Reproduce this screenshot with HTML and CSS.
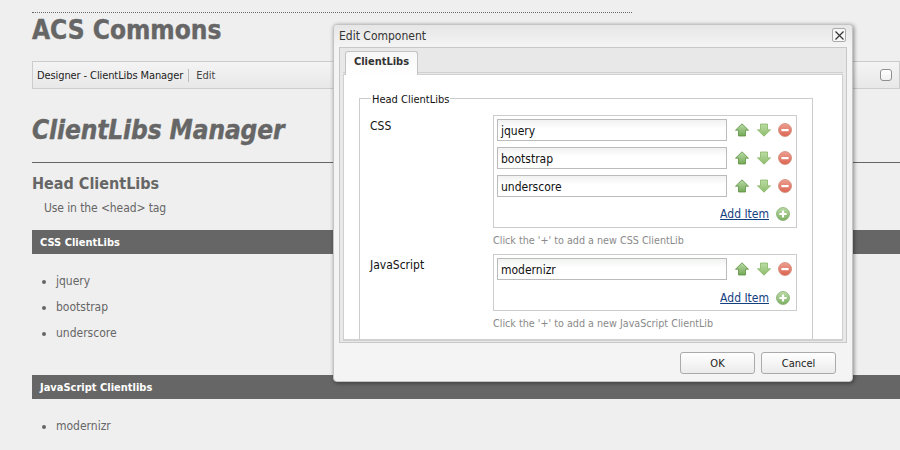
FILE: index.html
```html
<!DOCTYPE html>
<html lang="en">
<head>
  <meta charset="UTF-8" />
  <title>ClientLibs Manager</title>
  <link rel="stylesheet" href="styles.css">
</head>

<body>
  <svg class="defs" width="0" height="0">
    <defs>
      <linearGradient id="gradUp" x1="0" y1="0" x2="0" y2="1">
        <stop offset="0" stop-color="#b9dba6" />
        <stop offset="1" stop-color="#74a957" />
      </linearGradient>
      <linearGradient id="gradDown" x1="0" y1="0" x2="0" y2="1">
        <stop offset="0" stop-color="#bcdca4" />
        <stop offset="1" stop-color="#8dbd6c" />
      </linearGradient>
      <linearGradient id="gradRed" x1="0" y1="0" x2="0" y2="1">
        <stop offset="0" stop-color="#ec9f91" />
        <stop offset="1" stop-color="#dc6450" />
      </linearGradient>
      <linearGradient id="gradPlus" x1="0" y1="0" x2="0" y2="1">
        <stop offset="0" stop-color="#bcdba8" />
        <stop offset="1" stop-color="#7bb061" />
      </linearGradient>
      <symbol id="iconUp" viewBox="0 0 14 14">
        <path d="M7 .8 L13.5 7.2 H10.5 V13 H3.5 V7.2 H.5 Z" fill="url(#gradUp)" stroke="#5c9140" stroke-width=".8" stroke-linejoin="round" />
      </symbol>
      <symbol id="iconDown" viewBox="0 0 14 14">
        <path d="M7 13.2 L.5 6.8 H3.5 V1 H10.5 V6.8 H13.5 Z" fill="url(#gradDown)" stroke="#86b565" stroke-width=".8" stroke-linejoin="round" />
      </symbol>
      <symbol id="iconRemove" viewBox="0 0 14 14">
        <circle cx="7" cy="7" r="6.5" fill="url(#gradRed)" stroke="#cf8a7a" stroke-width=".8" />
        <rect x="3.4" y="6" width="7.2" height="2.2" fill="#fff" />
      </symbol>
      <symbol id="iconAdd" viewBox="0 0 14 14">
        <circle cx="7" cy="7" r="6.5" fill="url(#gradPlus)" stroke="#86ad72" stroke-width=".8" />
        <path d="M5.9 3.4 H8.1 V5.9 H10.6 V8.1 H8.1 V10.6 H5.9 V8.1 H3.4 V5.9 H5.9 Z" fill="#fff" />
      </symbol>
    </defs>
  </svg>

  <div class="page">
    <h1 class="site-title">ACS Commons</h1>

    <div class="toolbar">
      <span class="toolbar-name">Designer - ClientLibs Manager</span>
      <span class="toolbar-edit">Edit</span>
      <input class="toolbar-check" type="checkbox" />
    </div>

    <h2 class="page-title">ClientLibs Manager</h2>

    <h3 class="section-title">Head ClientLibs</h3>
    <p class="section-note">Use in the &lt;head&gt; tag</p>

    <div class="bar">CSS ClientLibs</div>
    <ul class="lib-list">
      <li>jquery</li>
      <li>bootstrap</li>
      <li>underscore</li>
    </ul>

    <div class="bar bar-js">JavaScript Clientlibs</div>
    <ul class="lib-list">
      <li>modernizr</li>
    </ul>
  </div>

  <div class="dialog">
    <div class="dialog-head">
      <span class="dialog-title">Edit Component</span>
      <span class="dialog-close">
        <svg width="9" height="9" viewBox="0 0 9 9"><path d="M.5 .5 L8.5 8.5 M8.5 .5 L.5 8.5" stroke="#333" stroke-width="1.2" /></svg>
      </span>
    </div>

    <div class="dialog-panel">
      <div class="tab-strip">
        <div class="tab">ClientLibs</div>
      </div>

      <div class="tab-body">
        <div class="fieldset">
          <div class="legend">Head ClientLibs</div>

          <div class="field">
            <div class="field-label">CSS</div>
            <div class="field-main">
              <div class="multi multi-css">
                <div class="multi-row">
                  <div class="text-input">jquery</div>
                  <svg class="icon icon-up"><use href="#iconUp" /></svg>
                  <svg class="icon"><use href="#iconDown" /></svg>
                  <svg class="icon"><use href="#iconRemove" /></svg>
                </div>
                <div class="multi-row">
                  <div class="text-input">bootstrap</div>
                  <svg class="icon icon-up"><use href="#iconUp" /></svg>
                  <svg class="icon"><use href="#iconDown" /></svg>
                  <svg class="icon"><use href="#iconRemove" /></svg>
                </div>
                <div class="multi-row">
                  <div class="text-input">underscore</div>
                  <svg class="icon icon-up"><use href="#iconUp" /></svg>
                  <svg class="icon"><use href="#iconDown" /></svg>
                  <svg class="icon"><use href="#iconRemove" /></svg>
                </div>
                <div class="add-row">
                  <a class="add-link" href="#">Add Item</a>
                  <svg class="icon"><use href="#iconAdd" /></svg>
                </div>
              </div>
              <div class="hint">Click the '+' to add a new CSS ClientLib</div>
            </div>
          </div>

          <div class="field">
            <div class="field-label">JavaScript</div>
            <div class="field-main">
              <div class="multi multi-js">
                <div class="multi-row">
                  <div class="text-input">modernizr</div>
                  <svg class="icon icon-up"><use href="#iconUp" /></svg>
                  <svg class="icon"><use href="#iconDown" /></svg>
                  <svg class="icon"><use href="#iconRemove" /></svg>
                </div>
                <div class="add-row">
                  <a class="add-link" href="#">Add Item</a>
                  <svg class="icon"><use href="#iconAdd" /></svg>
                </div>
              </div>
              <div class="hint">Click the '+' to add a new JavaScript ClientLib</div>
            </div>
          </div>
        </div>
      </div>
    </div>

    <div class="dialog-foot">
      <button class="btn">OK</button>
      <button class="btn">Cancel</button>
    </div>
  </div>
</body>
</html>
```

FILE: styles.css
```css
html, body {
  margin: 0;
  padding: 0;
  height: 450px;
  overflow: hidden;
}

body {
  position: relative;
  background: #efefef;
  color: #666;
  font-family: "DejaVu Sans Condensed", "DejaVu Sans", sans-serif;
  font-stretch: condensed;
  font-size: 11px;
}

.defs {
  position: absolute;
}

.page {
  margin-left: 32px;
  padding-top: 12px;
}

.site-title {
  width: 600px;
  height: 36px;
  margin: 0;
  border-top: 1px dotted #666;
  font-size: 26px;
  line-height: 35px;
  font-weight: 700;
  -webkit-text-stroke: 0.4px #666;
}

.toolbar {
  display: flex;
  align-items: center;
  box-sizing: border-box;
  height: 28px;
  margin: 12px 0 0;
  padding: 0 7px 0 4px;
  width: 868px;
  border: 1px solid #ccc;
  background: linear-gradient(#f4f4f4, #e8e8e8);
  color: #222;
}

.toolbar-name {
  padding-right: 5px;
  border-right: 1px solid #bbb;
  line-height: 13px;
  letter-spacing: -0.1px;
  white-space: nowrap;
}

.toolbar-edit {
  margin-left: 7px;
  color: #444;
}

.toolbar-check {
  appearance: none;
  box-sizing: border-box;
  width: 12px;
  height: 12px;
  margin: 0 0 0 auto;
  border: 1px solid #8f8f8f;
  border-radius: 3px;
  background: linear-gradient(#fff, #f0f0f0);
}

.page-title {
  margin: 23px 0 0;
  height: 50px;
  border-bottom: 1px solid #666;
  font-size: 26px;
  line-height: 36px;
  font-style: italic;
  font-weight: 700;
  letter-spacing: -0.1px;
  -webkit-text-stroke: 0.4px #666;
}

.section-title {
  margin: 12px 0 0;
  font-size: 16px;
  line-height: 18px;
  font-weight: 700;
}

.section-note {
  margin: 7px 0 0 12px;
  font-size: 12px;
  line-height: 16px;
  letter-spacing: -0.1px;
}

.bar {
  box-sizing: border-box;
  height: 24px;
  margin-top: 14px;
  padding: 1px 0 0 8px;
  background: #666;
  color: #fff;
  font-size: 11px;
  font-weight: 700;
  line-height: 23px;
}

.bar-js {
  margin-top: 29px;
}

.lib-list {
  margin: 14px 0 0;
  padding: 0 0 0 24px;
  font-size: 12px;
  line-height: 26px;
}

.dialog {
  position: absolute;
  left: 333px;
  top: 24px;
  box-sizing: border-box;
  width: 520px;
  height: 358px;
  padding: 0 5px;
  border: 1px solid #c4c4c4;
  border-radius: 4px;
  background: #f4f4f4;
  box-shadow: 1px 1px 4px rgba(0, 0, 0, 0.45);
  color: #111;
  font-size: 11px;
}

.dialog-head {
  display: flex;
  justify-content: space-between;
  align-items: center;
  height: 20px;
  margin: 0 -5px;
  padding: 0 6px 2px 5px;
  border-radius: 4px 4px 0 0;
  background: linear-gradient(#e6e6e6, #f4f4f4);
  color: #333;
  font-size: 12px;
}

.dialog-title {
  padding-top: 2px;
}

.dialog-close {
  display: flex;
  align-items: center;
  justify-content: center;
  box-sizing: border-box;
  width: 14px;
  height: 14px;
  border: 1px solid #aaa;
  border-radius: 2px;
  background: #f7f7f7;
}

.dialog-panel {
  box-sizing: border-box;
  height: 296px;
  border: 1px solid #c8c8c8;
  background: #e8e8e8;
}

.tab-strip {
  display: flex;
  height: 24px;
  margin: 0 3px;
  padding-left: 2px;
  border-bottom: 1px solid #d0d0d0;
}

.tab {
  box-sizing: border-box;
  position: relative;
  width: 73px;
  height: 24px;
  margin-top: 3px;
  border: 1px solid #c4c4c4;
  border-bottom: none;
  border-radius: 3px 3px 0 0;
  background: linear-gradient(#f7f7f7, #fff);
  color: #333;
  font-weight: 700;
  text-align: center;
  line-height: 19px;
}

.tab-body {
  box-sizing: border-box;
  height: 267px;
  margin: 1px 3px 0;
  overflow: hidden;
  border: 1px solid #d0d0d0;
  border-bottom-width: 2px;
  background: #fff;
}

.fieldset {
  box-sizing: border-box;
  position: relative;
  width: 454px;
  height: 280px;
  margin: 23px 0 0 15px;
  padding: 16px 0 0 10px;
  border: 1px solid #ccc;
}

.legend {
  position: absolute;
  top: -6px;
  left: 11px;
  padding: 0 1px;
  background: #fff;
  font-size: 11px;
  line-height: 13px;
  white-space: nowrap;
}

.field {
  display: flex;
}

.field-label {
  width: 123px;
  padding-top: 4px;
  font-size: 12px;
  line-height: 14px;
}

.field-main {
  width: 304px;
  padding-bottom: 7px;
}

.multi {
  box-sizing: border-box;
  width: 304px;
  padding: 3px 2px 0 3px;
  border: 1px solid #ccc;
}

.multi-css {
  height: 113px;
}

.multi-js {
  height: 57px;
}

.multi-js .add-row {
  margin-top: 10px;
}

.multi-row {
  display: flex;
  align-items: center;
  gap: 7px;
  height: 22px;
  margin-bottom: 6px;
}

.text-input {
  box-sizing: border-box;
  width: 230px;
  height: 22px;
  margin-right: 1px;
  padding: 1px 0 0 3px;
  border: 1px solid #bbb;
  background: linear-gradient(#f0f2f0, #fff 45%);
  font-size: 12px;
  line-height: 20px;
}

.icon {
  flex: none;
  width: 14px;
  height: 14px;
}

.icon-up {
  margin-right: 1px;
}

.add-row {
  display: flex;
  justify-content: flex-end;
  align-items: center;
  gap: 7px;
  height: 16px;
  padding-right: 4px;
  margin-top: 9px;
}

.add-link {
  color: #15407f;
  font-size: 12px;
}

.hint {
  margin-top: 6px;
  color: #8a8a8a;
  font-size: 10.7px;
  line-height: 13px;
}

.dialog-foot {
  display: flex;
  justify-content: flex-end;
  gap: 6px;
  padding: 9px 11px 0 0;
}

.btn {
  width: 75px;
  height: 22px;
  padding: 0;
  border: 1px solid #aaa;
  border-radius: 3px;
  background: linear-gradient(#fff, #ebebeb);
  color: #222;
  font-family: inherit;
  font-stretch: inherit;
  font-size: 11px;
}
```
